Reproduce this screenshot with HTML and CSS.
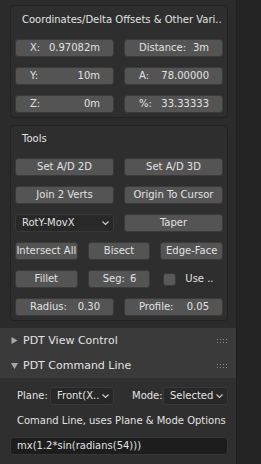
FILE: index.html
```html
<!DOCTYPE html>
<html lang="en">
<head>
  <meta charset="UTF-8">
  <meta name="viewport" content="width=device-width, initial-scale=1">
  <title>PDT Sidebar</title>
  <link rel="stylesheet" href="styles.css">
</head>
<body>

<div class="region">
  <div class="sidebar">

    <section class="subpanel coords">
      <div class="subpanel-title">Coordinates/Delta Offsets &amp; Other Vari..</div>
      <div class="grid two">
        <div class="num"><span>X:</span><span>0.97082m</span></div>
        <div class="num"><span>Distance:</span><span>3m</span></div>
        <div class="num"><span>Y:</span><span>10m</span></div>
        <div class="num"><span>A:</span><span>78.00000</span></div>
        <div class="num"><span>Z:</span><span>0m</span></div>
        <div class="num"><span>%:</span><span>33.33333</span></div>
      </div>
    </section>

    <section class="subpanel tools">
      <div class="subpanel-title">Tools</div>
      <div class="grid two">
        <button class="btn">Set A/D 2D</button>
        <button class="btn">Set A/D 3D</button>
        <button class="btn">Join 2 Verts</button>
        <button class="btn">Origin To Cursor</button>
        <div class="menu"><span>RotY-MovX</span><svg class="chevron" width="7" height="4" viewBox="0 0 7 4"><polyline points="0.5,0.5 3.5,3.5 6.5,0.5" /></svg></div>
        <button class="btn">Taper</button>
      </div>
      <div class="grid three">
        <button class="btn">Intersect All</button>
        <button class="btn">Bisect</button>
        <button class="btn">Edge-Face</button>
        <button class="btn">Fillet</button>
        <div class="num"><span>Seg:</span><span>6</span></div>
        <label class="check"><span class="box"></span>Use ..</label>
      </div>
      <div class="grid two">
        <div class="num"><span>Radius:</span><span>0.30</span></div>
        <div class="num"><span>Profile:</span><span>0.05</span></div>
      </div>
    </section>

    <div class="panel-header">
      <svg class="tri" width="6" height="7" viewBox="0 0 6 7"><polygon points="0,0 6,3.5 0,7" /></svg>
      <span class="panel-name">PDT View Control</span>
      <svg class="grip" width="10" height="4" viewBox="0 0 10 4"><g><rect x="0" y="0" width="1" height="1"/><rect x="3" y="0" width="1" height="1"/><rect x="6" y="0" width="1" height="1"/><rect x="9" y="0" width="1" height="1"/><rect x="0" y="3" width="1" height="1"/><rect x="3" y="3" width="1" height="1"/><rect x="6" y="3" width="1" height="1"/><rect x="9" y="3" width="1" height="1"/></g></svg>
    </div>

    <div class="panel-header">
      <svg class="tri" width="7" height="6" viewBox="0 0 7 6"><polygon points="0,0 7,0 3.5,6" /></svg>
      <span class="panel-name">PDT Command Line</span>
      <svg class="grip" width="10" height="4" viewBox="0 0 10 4"><g><rect x="0" y="0" width="1" height="1"/><rect x="3" y="0" width="1" height="1"/><rect x="6" y="0" width="1" height="1"/><rect x="9" y="0" width="1" height="1"/><rect x="0" y="3" width="1" height="1"/><rect x="3" y="3" width="1" height="1"/><rect x="6" y="3" width="1" height="1"/><rect x="9" y="3" width="1" height="1"/></g></svg>
    </div>

    <div class="panel-body">
      <div class="prop-row">
        <span class="prop-label plane">Plane:</span>
        <div class="menu plane-menu"><span>Front(X..</span><svg class="chevron" width="7" height="4" viewBox="0 0 7 4"><polyline points="0.5,0.5 3.5,3.5 6.5,0.5" /></svg></div>
        <span class="prop-label mode">Mode:</span>
        <div class="menu mode-menu"><span>Selected</span><svg class="chevron" width="7" height="4" viewBox="0 0 7 4"><polyline points="0.5,0.5 3.5,3.5 6.5,0.5" /></svg></div>
      </div>
      <div class="hint">Comand Line, uses Plane &amp; Mode Options</div>
      <div class="text-field">mx(1.2*sin(radians(54)))</div>
    </div>

  </div>
  <div class="scroll-strip"></div>
</div>

</body>
</html>
```

FILE: styles.css
```css
:root {
    --region-bg: #2b2b2b;
    --box-bg: #2e2e2e;
    --box-border: #222222;
    --header-bg: #3a3a3a;
    --body-bg: #2f2f2f;
    --btn-bg: #545454;
    --btn-border: #3a3a3a;
    --menu-bg: #282828;
    --field-bg: #1d1d1d;
    --text: #e2e2e2;
    --strip-bg: #242424;
}

* {
    margin: 0;
    padding: 0;
    box-sizing: border-box;
}

body {
    background: var(--region-bg);
    font-family: "DejaVu Sans", sans-serif;
    font-size: 10px;
    color: var(--text);
}

.region {
    display: flex;
    width: 261px;
    height: 464px;
    overflow: hidden;
}

.sidebar {
    width: 236px;
    padding-top: 5px;
    background: var(--region-bg);
    display: flex;
    flex-direction: column;
}

.scroll-strip {
    flex: 1;
    background: var(--strip-bg);
    border-left: 1px solid #1e1e1e;
}

/* sub-panels */

.subpanel {
    margin: 0 8px 0 10px;
    background: var(--box-bg);
    border: 1px solid var(--box-border);
    border-radius: 4px;
    padding: 0 4px 4px;
}

.tools {
    margin-top: 7px;
}

.subpanel-title {
    line-height: 12px;
    padding: 8px 0 13px 7px;
}

.tools .subpanel-title {
    padding-top: 7px;
}

.grid {
    display: grid;
    column-gap: 10px;
    row-gap: 10px;
    grid-auto-rows: 18px;
}

.grid + .grid {
    margin-top: 10px;
}

.two {
    grid-template-columns: 1fr 1fr;
}

.three {
    grid-template-columns: 1fr 1fr 1fr;
}

/* widgets */

.btn,
.num {
    height: 18px;
    background: var(--btn-bg);
    border: 1px solid var(--btn-border);
    border-radius: 3px;
    color: var(--text);
    font-family: inherit;
    font-size: 10px;
    line-height: 16px;
    white-space: nowrap;
}

.btn {
    text-align: center;
    padding: 0;
}

.num {
    display: flex;
    justify-content: space-between;
    padding: 0 13px 0 14px;
}

.menu {
    height: 18px;
    background: var(--menu-bg);
    border: 1px solid #383838;
    border-radius: 3px;
    display: flex;
    align-items: center;
    justify-content: space-between;
    padding: 0 4px 0 6px;
    line-height: 16px;
    white-space: nowrap;
}

.chevron {
    fill: none;
    stroke: #cfcfcf;
    stroke-width: 1.1;
}

.check {
    display: flex;
    align-items: center;
    gap: 9px;
    padding-left: 3px;
    line-height: 16px;
}

.check .box {
    width: 13px;
    height: 13px;
    background: #595959;
    border: 1px solid #3a3a3a;
    border-radius: 3px;
}

/* panel headers */

.panel-header {
    margin-top: 7px;
    height: 25px;
    background: var(--header-bg);
    display: flex;
    align-items: center;
    padding: 0 9px 0 11px;
    font-size: 11px;
}

.panel-header + .panel-header {
    margin-top: 0;
}

.tri {
    fill: #a8a8a8;
    width: 7px;
}

.panel-name {
    margin-left: 5px;
    flex: 1;
}

.grip {
    fill: #8a8a8a;
}

/* command line */

.panel-body {
    flex: 1;
    background: var(--body-bg);
    padding: 9px 8px 0 10px;
}

.prop-row {
    display: flex;
    align-items: center;
    height: 18px;
}

.prop-label {
    line-height: 18px;
}

.plane {
    margin-left: 7px;
    width: 33px;
}

.plane-menu {
    width: 64px;
}

.mode {
    margin-left: 18px;
    width: 31px;
}

.mode-menu {
    width: 65px;
}

.hint {
    margin: 10px 0 0 7px;
    line-height: 12px;
    white-space: nowrap;
}

.text-field {
    margin-top: 10px;
    height: 18px;
    background: var(--field-bg);
    border: 1px solid #363636;
    border-radius: 3px;
    padding-left: 6px;
    line-height: 16px;
    white-space: nowrap;
}
```
